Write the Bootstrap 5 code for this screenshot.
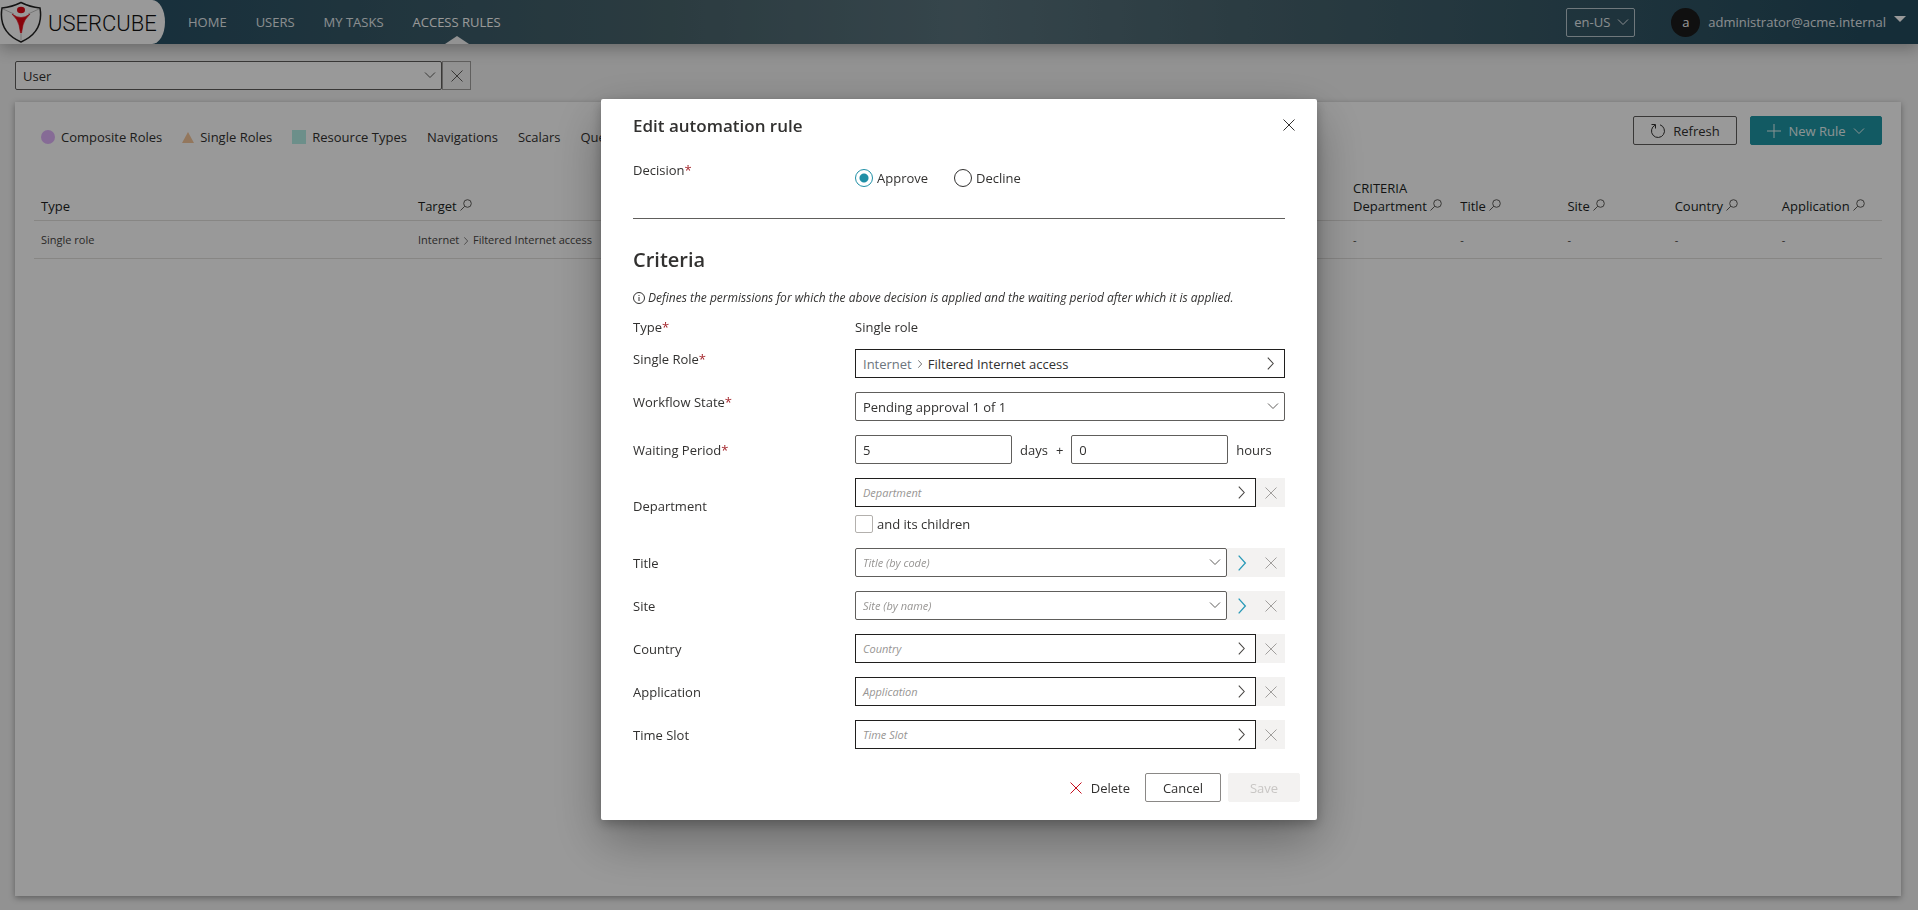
<!DOCTYPE html>
<html lang="en">
<head>
<meta charset="utf-8">
<meta name="viewport" content="width=device-width, initial-scale=1">
<title>Usercube - Access Rules</title>
<link rel="stylesheet" href="https://cdn.jsdelivr.net/npm/bootstrap@5.3.0/dist/css/bootstrap.min.css">
<style>
body{font:13px/20px "Open Sans","Noto Sans",sans-serif;color:#323130;background:#f3f3f3;overflow:hidden}
svg{fill:none;stroke:currentColor;stroke-width:1;flex:none}
.topbar{height:44px;padding:0;background:linear-gradient(90deg,#285064 8%,#49646c 35%,#5a747e 50%,#48646e 65%,#244c5e 97%);box-shadow:0 4px 16px rgba(0,0,0,.3);color:#fff;flex-wrap:nowrap;z-index:2}
.brand{width:165px;height:44px;background:#fff;border-radius:0 14px 14px 0/0 24px 24px 0;flex:none}
.wordmark{font:300 22px Roboto,sans-serif;fill:#111;stroke:none}
.topbar .nav-link{color:#e6ecef;padding:0;line-height:44px;position:relative}
.topbar .nav{gap:29px;margin-left:23px}
.topbar .nav-link.active{color:#fff}
.topbar .nav-link.active::after{content:"";position:absolute;bottom:0;left:50%;margin-left:-12px;border:12px solid transparent;border-top:0;border-bottom:8px solid #f3f3f3}
.lang{height:29px;width:69px;border:1px solid #b9c8cf;border-radius:2px;background:none;color:#e6ecef;padding:0 5px 0 7px}
.avatar{width:29px;height:29px;border-radius:50%;background:#1b1b1b;line-height:28px;text-align:center;color:#fff;font-weight:500}
.user-menu{background:none;border:0;color:#e6ecef;padding:0}
.tri{border:6px solid transparent;border-top-color:#fff;border-bottom:0;margin-bottom:6px}
.filter{padding:17px 15px 0}
.box{height:29px;border:1px solid #605e5c;border-radius:2px;background:#fff;font-size:13px;line-height:20px;padding:0 7px;color:#323130;display:flex;align-items:center;width:100%;text-align:left}
select.box{appearance:none}
.pick{position:relative;flex:1 1 0;min-width:0}
.pick>svg{position:absolute;right:6px;top:8px;pointer-events:none;color:#605e5c}
.pick>svg.fwd{right:8px;color:#484644}
.filter .pick{flex:0 0 427px}
.clear{width:29px;height:29px;padding:0;border:1px solid #a19f9d;background:none;color:#605e5c;display:grid;place-items:center}
.panel{margin:12px 17px 14px 15px;background:#fff;box-shadow:0 2px 6px rgba(0,0,0,.35);flex:1 1 0;padding:14px 19px}
.tabs{gap:20px;padding-left:7px;padding-top:11px}
.tabs a{color:#323130;text-decoration:none;display:flex;align-items:center;gap:6px}
.act{height:29px;width:104px;border-radius:2px;font-size:13px;line-height:20px;padding:0;display:flex;align-items:center;justify-content:center;gap:7px;border:1px solid #605e5c;color:#323130}
.act.new{width:132px;background:#1f97a5;border-color:#1f97a5;color:#e8f5f6}
.acts{gap:13px}
.rules{width:100%;table-layout:fixed;margin-top:32px}
.rules th{font-weight:500;line-height:18px;vertical-align:bottom;padding:0 7px 5px;height:41px;border-bottom:1px solid #e1dfdd;color:#201f1e;white-space:nowrap}
.rules th svg{color:#605e5c;vertical-align:0}
.rules td{font-size:11px;line-height:18px;padding:0 7px;height:38px;border-bottom:1px solid #e1dfdd;color:#484644;white-space:nowrap}
.modal-backdrop{--bs-backdrop-opacity:.4}
.modal-dialog{max-width:716px;margin:99px auto 0}
.modal-content{border:0;border-radius:2px;box-shadow:0 20px 50px rgba(0,0,0,.32),0 4px 12px rgba(0,0,0,.25);color:#323130}
.modal-header{border:0;padding:16px 18px 0 32px;height:53px;align-items:flex-start}
.modal-title{font-size:17px;line-height:22px;font-weight:600;margin:0}
.plain{background:none;border:0;padding:0;color:#323130;display:flex;align-items:center}
.modal-body{padding:0 32px}
.line{display:grid;grid-template-columns:222px 1fr;margin-bottom:14px}
.line>label,.line>.lb{font-weight:500;line-height:20px;align-self:center}
.line.up>label,.line.up>.lb{align-self:start}
.req::after{content:"*";color:#a4262c}
.opt{display:flex;align-items:center;gap:4px;line-height:20px}
.opt input{appearance:none;width:18px;height:18px;margin:0;border:1px solid #323130;border-radius:50%;background:#fff}
.opt input[type=checkbox]{border-radius:2px;border-color:#b3b0ad}
.opt input:checked{border-color:#1f8fa6;background:radial-gradient(circle,#1f8fa6 0 4px,#fff 5px)}
.choices{gap:26px;padding-top:8px}
.kids{margin-top:7px}
hr{margin:30px 0 27px;border:0;border-top:1px solid #605e5c;opacity:1}
h2{font-size:20px;line-height:28px;font-weight:600;margin:0}
.note{font-style:italic;font-size:12px;line-height:20px;display:flex;align-items:center;gap:3px;margin:14px 0 9px}
.dark{border-color:#201f1e;border-radius:0}
.box.ph{font-size:11px;font-style:italic;color:#979593}
.side{width:29px;height:29px;background:#f3f2f1;border:0;padding:0;color:#a19f9d;display:grid;place-items:center}
.side.go{color:#2a9ab8}
.part{flex:0 0 157px;width:157px}
.modal-footer{border:0;padding:0 17px 18px;gap:7px;margin-top:10px;flex-wrap:nowrap}
.modal-footer>*{margin:0}
.foot{height:29px;font-size:13px;line-height:20px;padding:0;border:1px solid #8a8886;border-radius:2px;color:#323130;width:76px}
.foot:disabled{width:72px;background:#f3f2f1;border-color:#f3f2f1;color:#c8c6c4;opacity:1}
.del{gap:9px;margin-right:8px}
.del svg{color:#c50f1f}
</style>
</head>
<body class="d-flex flex-column vh-100">
<svg width="0" height="0" class="position-absolute"><defs>
<symbol id="down" viewBox="0 0 12 12"><path d="M1 3.500L6 8.500L11 3.500"/></symbol>
<symbol id="right" viewBox="0 0 12 12"><path d="M3.500 .500L8.500 6L3.500 11.500"/></symbol>
<symbol id="x" viewBox="0 0 12 12"><path d="M.500 .500L11.500 11.500M11.500 .500L.500 11.500"/></symbol>
<symbol id="find" viewBox="0 0 12 12"><circle cx="7.500" cy="4.500" r="3.800"/><path d="M4.800 7.200L.5 11.500"/></symbol>
</defs></svg>
<header class="navbar topbar">
<a href="#" class="brand" aria-label="Usercube home"><svg width="165" height="44" viewBox="0 0 165 44"><path d="M2 8Q12 7 21 2.500Q30 7 40 8Q44 32 21 42Q-2 32 2 8Z" stroke="#222" stroke-width="1.500"/><path d="M21 34V40M3 9L14 14M39 9L28 14" stroke="#aaa" stroke-width=".7"/><ellipse cx="21" cy="10" rx="4" ry="3.200" fill="#e30613" stroke="none"/><path d="M12 14Q21 21 30 14Q24 20 23 25L21.500 33H20.500L19 25Q18 20 12 14Z" fill="#e30613" stroke="#e30613" stroke-width=".6"/><text x="48" y="31" class="wordmark">USERCUBE</text></svg></a>
<nav class="nav flex-nowrap"><a class="nav-link" href="#">HOME</a><a class="nav-link" href="#">USERS</a><a class="nav-link" href="#">MY TASKS</a><a class="nav-link active" href="#">ACCESS RULES</a></nav>
<div class="d-flex align-items-center ms-auto me-2"><button class="lang d-flex align-items-center justify-content-between" type="button">en-US<svg width="12" height="12"><use href="#down"/></svg></button>
<button class="user-menu d-flex align-items-center ms-4 ps-2" type="button"><span class="avatar ms-1">a</span><span class="ms-2">administrator@acme.internal</span><span class="tri ms-2 me-1"></span></button></div>
</header>
<div class="filter d-flex"><div class="pick"><select class="box" aria-label="Entity type"><option>User</option></select><svg width="12" height="12"><use href="#down"/></svg></div><button class="clear" type="button" aria-label="Clear"><svg width="12" height="12"><use href="#x"/></svg></button></div>
<main class="panel">
<div class="d-flex justify-content-between align-items-start"><nav class="tabs d-flex align-items-center">
<a href="#"><svg width="14" height="14"><circle cx="7" cy="7" r="7" fill="#e0b3fb" stroke="none"/></svg>Composite Roles</a>
<a href="#"><svg width="12" height="12"><path d="M6 1L12 12H0Z" fill="#f6c79c" stroke="none"/></svg>Single Roles</a>
<a href="#"><svg width="14" height="14"><rect width="14" height="14" fill="#b5efe6" stroke="none"/></svg>Resource Types</a>
<a href="#">Navigations</a><a href="#">Scalars</a><a href="#">Queries</a></nav>
<div class="d-flex acts"><button class="act btn" type="button"><svg width="16" height="16"><path d="M5 2.200A6.500 6.500 0 1 0 10 1.800M1.500 1.500H5.500V5.500"/></svg>Refresh</button><button class="act new btn" type="button"><svg width="14" height="14"><path d="M7 0V14M0 7H14"/></svg>New Rule<svg width="12" height="12"><use href="#down"/></svg></button></div></div>
<table class="rules"><colgroup><col style="width:20.400%"><col style="width:50.600%"><col span="5"></colgroup>
<thead><tr><th>Type</th><th>Target <svg width="12" height="12"><use href="#find"/></svg></th><th>CRITERIA<br>Department <svg width="12" height="12"><use href="#find"/></svg></th><th>Title <svg width="12" height="12"><use href="#find"/></svg></th><th>Site <svg width="12" height="12"><use href="#find"/></svg></th><th>Country <svg width="12" height="12"><use href="#find"/></svg></th><th>Application <svg width="12" height="12"><use href="#find"/></svg></th></tr></thead>
<tbody><tr><td>Single role</td><td>Internet <svg width="8" height="8"><use href="#right"/></svg> Filtered Internet access</td><td>-</td><td>-</td><td>-</td><td>-</td><td>-</td></tr></tbody></table>
</main>
<div class="modal-backdrop show"></div>
<div class="modal d-block" role="dialog" aria-labelledby="dlg"><div class="modal-dialog"><form class="modal-content">
<div class="modal-header"><h1 class="modal-title" id="dlg">Edit automation rule</h1><button class="plain p-1 ms-auto" type="button" aria-label="Close"><svg width="12" height="12"><use href="#x"/></svg></button></div>
<div class="modal-body">
<div class="line up pt-2 mb-0"><span class="lb req">Decision</span><div class="d-flex choices"><label class="opt"><input type="radio" name="d" checked>Approve</label><label class="opt"><input type="radio" name="d">Decline</label></div></div>
<hr><h2>Criteria</h2>
<p class="note"><svg width="12" height="12"><circle cx="6" cy="6" r="5.500"/><path d="M6 5V9M6 3V4"/></svg>Defines the permissions for which the above decision is applied and the waiting period after which it is applied.</p>
<div class="line mb-2 pb-1"><span class="lb req">Type</span><span>Single role</span></div>
<div class="line up"><label class="req" for="role">Single Role</label><div class="pick"><button class="box dark" id="role" type="button"><span class="text-secondary">Internet</span><svg class="mx-1" width="8" height="10"><use href="#right"/></svg>Filtered Internet access</button><svg class="fwd" width="13" height="13"><use href="#right"/></svg></div></div>
<div class="line up"><label class="req" for="wf">Workflow State</label><div class="pick"><select class="box" id="wf"><option>Pending approval 1 of 1</option></select><svg width="12" height="12"><use href="#down"/></svg></div></div>
<div class="line"><label class="req" for="days">Waiting Period</label><div class="d-flex align-items-center"><input class="box part" id="days" value="5"><span class="ms-2">days</span><span class="mx-2">+</span><input class="box part" id="hours" value="0"><label class="ms-2" for="hours">hours</label></div></div>
<div class="line"><label for="dep">Department</label><div><div class="d-flex"><div class="pick"><button class="box dark ph" id="dep" type="button">Department</button><svg class="fwd" width="13" height="13"><use href="#right"/></svg></div><button class="side" type="button" disabled aria-label="Clear"><svg width="12" height="12"><use href="#x"/></svg></button></div><label class="opt kids"><input type="checkbox">and its children</label></div></div>
<div class="line"><label for="tit">Title</label><div class="d-flex"><div class="pick"><select class="box ph" id="tit"><option>Title (by code)</option></select><svg width="12" height="12"><use href="#down"/></svg></div><button class="side go" type="button" aria-label="Open"><svg width="16" height="16"><use href="#right"/></svg></button><button class="side" type="button" disabled aria-label="Clear"><svg width="12" height="12"><use href="#x"/></svg></button></div></div>
<div class="line"><label for="site">Site</label><div class="d-flex"><div class="pick"><select class="box ph" id="site"><option>Site (by name)</option></select><svg width="12" height="12"><use href="#down"/></svg></div><button class="side go" type="button" aria-label="Open"><svg width="16" height="16"><use href="#right"/></svg></button><button class="side" type="button" disabled aria-label="Clear"><svg width="12" height="12"><use href="#x"/></svg></button></div></div>
<div class="line"><label for="cty">Country</label><div class="d-flex"><div class="pick"><button class="box dark ph" id="cty" type="button">Country</button><svg class="fwd" width="13" height="13"><use href="#right"/></svg></div><button class="side" type="button" disabled aria-label="Clear"><svg width="12" height="12"><use href="#x"/></svg></button></div></div>
<div class="line"><label for="app">Application</label><div class="d-flex"><div class="pick"><button class="box dark ph" id="app" type="button">Application</button><svg class="fwd" width="13" height="13"><use href="#right"/></svg></div><button class="side" type="button" disabled aria-label="Clear"><svg width="12" height="12"><use href="#x"/></svg></button></div></div>
<div class="line"><label for="slot">Time Slot</label><div class="d-flex"><div class="pick"><button class="box dark ph" id="slot" type="button">Time Slot</button><svg class="fwd" width="13" height="13"><use href="#right"/></svg></div><button class="side" type="button" disabled aria-label="Clear"><svg width="12" height="12"><use href="#x"/></svg></button></div></div>
</div>
<div class="modal-footer"><button class="plain del" type="button"><svg width="12" height="12"><use href="#x"/></svg>Delete</button><button class="btn foot" type="button">Cancel</button><button class="btn foot" type="submit" disabled>Save</button></div>
</form></div></div>
<script src="https://cdn.jsdelivr.net/npm/bootstrap@5.3.0/dist/js/bootstrap.bundle.min.js"></script>
</body>
</html>
